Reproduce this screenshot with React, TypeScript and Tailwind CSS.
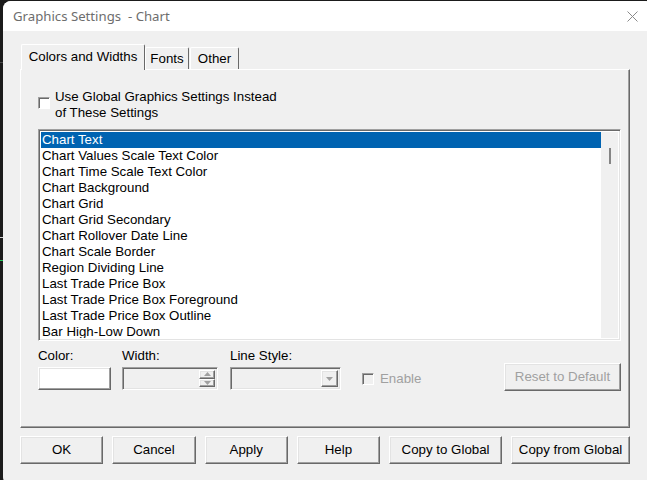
const items = [
  "Chart Text",
  "Chart Values Scale Text Color",
  "Chart Time Scale Text Color",
  "Chart Background",
  "Chart Grid",
  "Chart Grid Secondary",
  "Chart Rollover Date Line",
  "Chart Scale Border",
  "Region Dividing Line",
  "Last Trade Price Box",
  "Last Trade Price Box Foreground",
  "Last Trade Price Box Outline",
  "Bar High-Low Down",
];

const raised =
  "border border-t-white border-l-white border-r-[#696969] border-b-[#696969] shadow-[inset_-1px_-1px_0_#a0a0a0,inset_1px_1px_0_#e3e3e3]";
const sunken =
  "border border-t-[#a0a0a0] border-l-[#a0a0a0] border-r-white border-b-white shadow-[inset_1px_1px_0_#696969,inset_-1px_-1px_0_#e3e3e3]";

function Btn({ label, w, disabled }: { label: string; w: string; disabled?: boolean }) {
  return (
    <div
      className={`${raised} ${w} h-[28px] bg-[#f0f0f0] flex items-center justify-center text-[13.3px] ${
        disabled ? "text-[#a0a0a0]" : "text-black"
      }`}
    >
      {label}
    </div>
  );
}

function Arrow({ up }: { up?: boolean }) {
  return (
    <svg width="7" height="4" viewBox="0 0 7 4">
      {up ? <path d="M3.5 0 L7 4 L0 4 Z" fill="#a0a0a0" /> : <path d="M0 0 L7 0 L3.5 4 Z" fill="#a0a0a0" />}
    </svg>
  );
}

export default function App() {
  return (
    <div
      className="w-[647px] h-[480px] bg-[#1b1b1b] flex overflow-hidden"
      style={{ fontFamily: '"Liberation Sans", Arial, sans-serif' }}
    >
      <div className="w-[3px] flex flex-col shrink-0">
        <div className="h-[62px]" />
        <div className="h-px bg-[#4a4a4a]" />
        <div className="h-[174px]" />
        <div className="h-px bg-[#d0d0d0]" />
        <div className="h-[22px]" />
        <div className="h-px bg-[#22c55e]" />
      </div>
      <div className="mt-px w-[650px] h-[484px] rounded-[8px] bg-[#f0f0f0] overflow-hidden flex flex-col shrink-0">
        <div className="h-[30px] bg-white flex items-center justify-between pl-[10px] pr-[9px]">
          <span
            className="mt-[2px] text-[13.2px] text-[#6d6d6d] whitespace-pre"
            style={{ fontFamily: '"Noto Sans", "Open Sans", sans-serif' }}
          >
            Graphics Settings  - Chart
          </span>
          <svg width="11" height="11" viewBox="0 0 11 11" className="mr-[6px]">
            <path d="M0.5 0.5 L10.5 10.5 M10.5 0.5 L0.5 10.5" stroke="#8a8a8a" strokeWidth="1" />
          </svg>
        </div>

        <div className="pl-[17px] w-[627px] flex flex-col">
          {/* tabs */}
          <div className="mt-[13px] h-[25px] flex items-end pl-[1px]">
            <div className="relative z-10 h-[26px] w-[124px] bg-[#f0f0f0] border-t border-l border-white border-r border-r-[#696969] rounded-t-[2px] flex items-center justify-center text-[13.3px] text-black -mb-px pb-[2px]">
              Colors and Widths
            </div>
            <div className="h-[22px] w-[44px] border-t border-l border-white border-r border-r-[#696969] rounded-t-[2px] flex items-center justify-center text-[13.3px] text-black">
              Fonts
            </div>
            <div className="ml-[1px] h-[22px] w-[49px] border-t border-l border-white border-r border-r-[#696969] rounded-t-[2px] flex items-center justify-center text-[13.3px] text-black">
              Other
            </div>
          </div>

          {/* panel */}
          <div className="h-[359px] border-t border-l border-white border-r border-r-[#696969] border-b border-b-[#696969] shadow-[inset_-1px_-1px_0_#a0a0a0] flex flex-col pl-[17px]">
            <div className="mt-[19px] flex items-start">
              <div className="mt-[8px] w-[12px] h-[12px] bg-white border border-t-[#a0a0a0] border-l-[#a0a0a0] border-r-white border-b-white shadow-[inset_1px_1px_0_#696969]" />
              <div className="ml-[5px] text-[13.3px] leading-[16px] text-black">
                Use Global Graphics Settings Instead
                <br />
                of These Settings
              </div>
            </div>

            {/* listbox */}
            <div className={`${sunken} mt-[8px] w-[583px] h-[212px] bg-white flex p-[2px]`}>
              <div className="flex-1 overflow-hidden flex flex-col">
                {items.map((it, i) => (
                  <div
                    key={it}
                    className={`h-[16px] shrink-0 leading-[16px] text-[13.3px] pl-[1px] whitespace-nowrap ${
                      i === 0 ? "bg-[#0063b1] text-white" : "text-black"
                    }`}
                  >
                    {it}
                  </div>
                ))}
              </div>
              <div className="w-[17px] bg-[#f0f0f0] flex justify-center pt-[16px]">
                <div className="w-[2px] h-[16px] bg-[#858585]" />
              </div>
            </div>

            {/* controls */}
            <div className="mt-[7px] flex items-end">
              <div className="flex flex-col w-[84px]">
                <span className="text-[13.3px] leading-[15px] text-black">Color:</span>
                <div className={`${raised} mt-[4px] w-[73px] h-[23px] bg-white`} />
              </div>
              <div className="flex flex-col w-[108px]">
                <span className="text-[13.3px] leading-[15px] text-black">Width:</span>
                <div className={`${sunken} mt-[4px] w-[96px] h-[23px] bg-[#f0f0f0] flex justify-end p-[2px]`}>
                  <div className="w-[16px] flex flex-col">
                    <div className={`${raised} flex-1 flex items-center justify-center`}>
                      <Arrow up />
                    </div>
                    <div className={`${raised} flex-1 flex items-center justify-center`}>
                      <Arrow />
                    </div>
                  </div>
                </div>
              </div>
              <div className="flex flex-col w-[132px]">
                <span className="text-[13.3px] leading-[15px] text-black">Line Style:</span>
                <div className={`${sunken} mt-[4px] w-[111px] h-[23px] bg-[#f0f0f0] flex justify-end p-[2px]`}>
                  <div className={`${raised} w-[17px] flex items-center justify-center`}>
                    <Arrow />
                  </div>
                </div>
              </div>
              <div className="h-[23px] flex items-center">
                <div className="w-[12px] h-[12px] border border-t-[#a0a0a0] border-l-[#a0a0a0] border-r-white border-b-white shadow-[inset_1px_1px_0_#696969]" />
                <span className="ml-[6px] text-[13.3px] text-[#a0a0a0]">Enable</span>
              </div>
              <div className="ml-auto mr-[8px] mb-[-1px]">
                <Btn label="Reset to Default" w="w-[117px]" disabled />
              </div>
            </div>
          </div>

          {/* bottom buttons */}
          <div className="mt-[8px] flex gap-[9px]">
            <Btn label="OK" w="w-[84px]" />
            <Btn label="Cancel" w="w-[84px]" />
            <Btn label="Apply" w="w-[84px]" />
            <Btn label="Help" w="w-[84px]" />
            <Btn label="Copy to Global" w="w-[114px]" />
            <Btn label="Copy from Global" w="w-[120px]" />
          </div>
        </div>
      </div>
    </div>
  );
}
